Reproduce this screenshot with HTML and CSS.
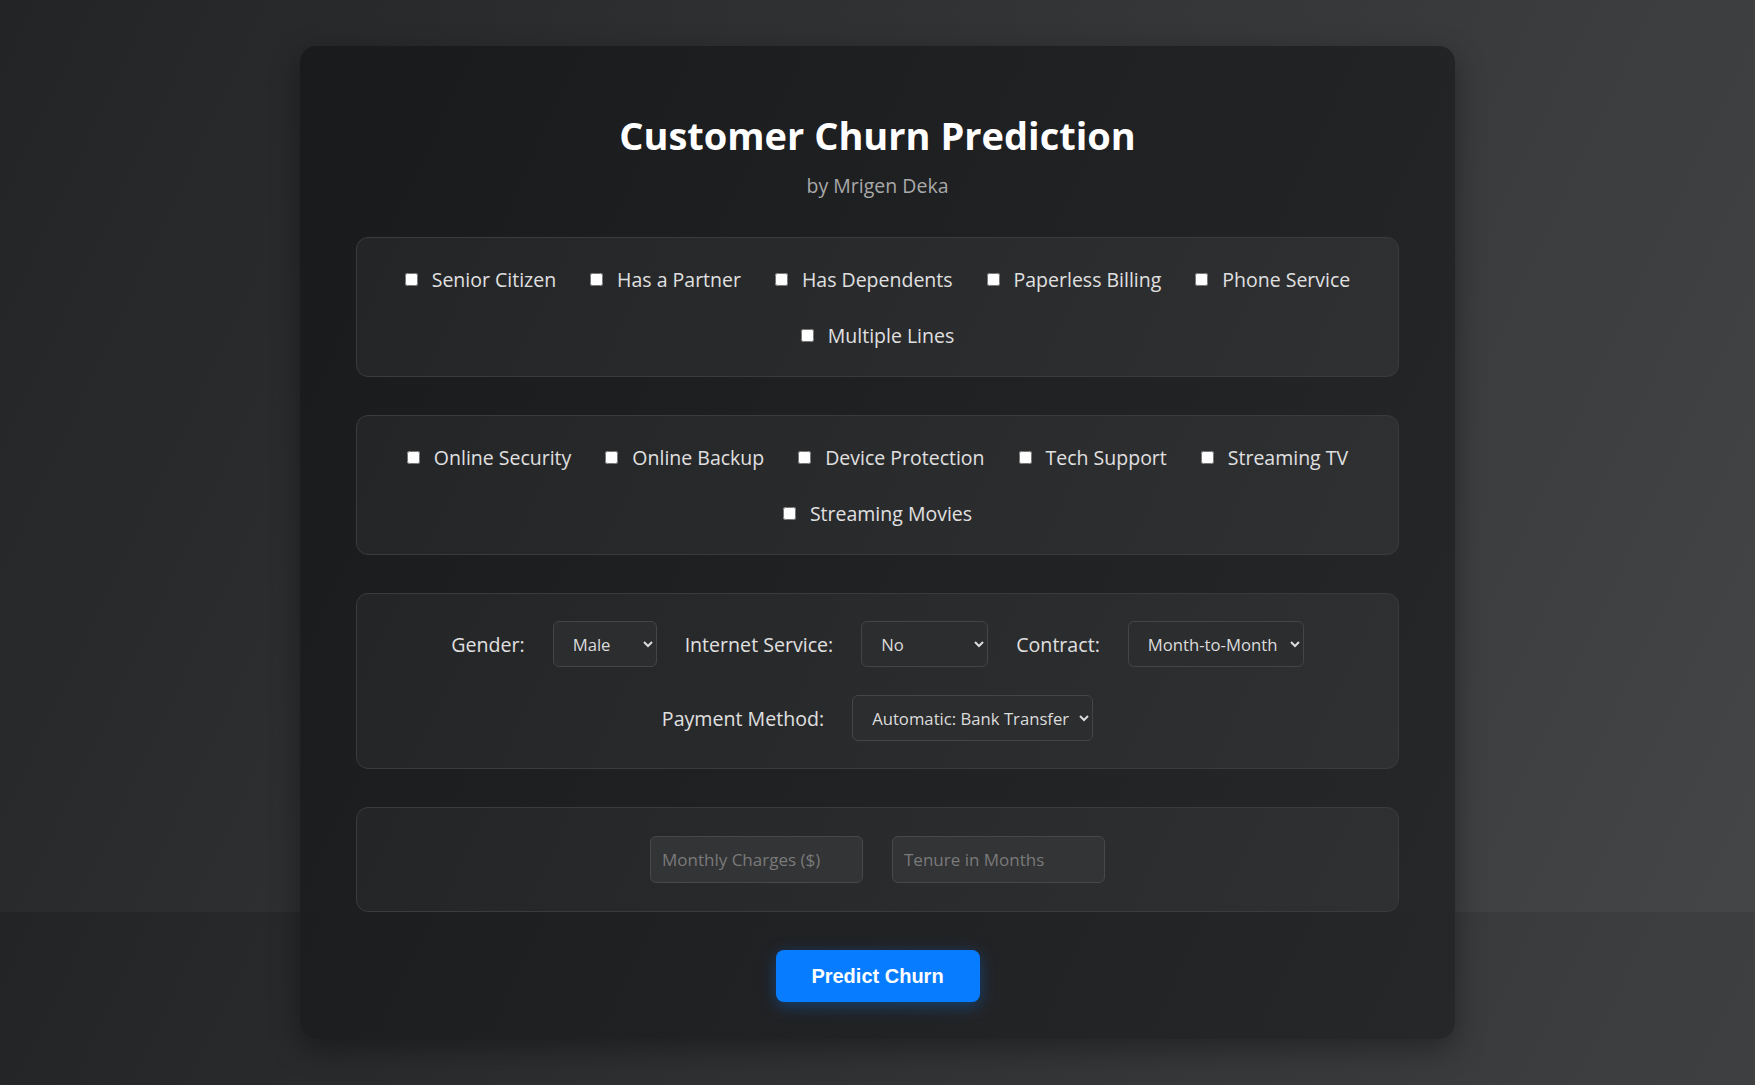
FILE: index.html
```html
<!DOCTYPE html>
<html lang="en">
<head>
<meta charset="utf-8">
<title>Customer Churn Prediction</title>
<link rel="stylesheet" href="styles.css">
</head>
<body>
<main class="card">
  <h1 class="title">Customer Churn Prediction</h1>
  <p class="subtitle">by Mrigen Deka</p>
  <form class="form">
    <section class="panel checks">
      <label class="check"><input type="checkbox"><span>Senior Citizen</span></label>
      <label class="check"><input type="checkbox"><span>Has a Partner</span></label>
      <label class="check"><input type="checkbox"><span>Has Dependents</span></label>
      <label class="check"><input type="checkbox"><span>Paperless Billing</span></label>
      <label class="check"><input type="checkbox"><span>Phone Service</span></label>
      <label class="check"><input type="checkbox"><span>Multiple Lines</span></label>
    </section>
    <section class="panel checks">
      <label class="check"><input type="checkbox"><span>Online Security</span></label>
      <label class="check"><input type="checkbox"><span>Online Backup</span></label>
      <label class="check"><input type="checkbox"><span>Device Protection</span></label>
      <label class="check"><input type="checkbox"><span>Tech Support</span></label>
      <label class="check"><input type="checkbox"><span>Streaming TV</span></label>
      <label class="check"><input type="checkbox"><span>Streaming Movies</span></label>
    </section>
    <section class="panel selects">
      <div class="field">
        <span class="field-label">Gender:</span>
        <select class="select select-gender"><option>Male</option><option>Female</option></select>
      </div>
      <div class="field">
        <span class="field-label">Internet Service:</span>
        <select class="select select-internet"><option>No</option><option>DSL</option><option>Fiber optic</option></select>
      </div>
      <div class="field">
        <span class="field-label">Contract:</span>
        <select class="select select-contract"><option>Month-to-Month</option><option>One year</option><option>Two year</option></select>
      </div>
      <div class="field">
        <span class="field-label">Payment Method:</span>
        <select class="select select-payment"><option>Automatic: Bank Transfer</option><option>Automatic: Credit Card</option><option>Electronic Check</option><option>Mailed Check</option></select>
      </div>
    </section>
    <section class="panel inputs">
      <input class="text-input" type="text" placeholder="Monthly Charges ($)">
      <input class="text-input" type="text" placeholder="Tenure in Months">
    </section>
    <div class="actions">
      <button class="predict" type="button">Predict Churn</button>
    </div>
  </form>
</main>
</body>
</html>
```

FILE: styles.css
```css
html {
  background-color: #2f3032;
  background-image: linear-gradient(115deg, #232426 0%, #444547 100%);
  background-size: 100% 912px;
  background-repeat: repeat-y;
}

body {
  margin: 0;
  min-height: 100vh;
  display: flex;
  align-items: center;
  justify-content: center;
  font-family: "Open Sans", "Noto Sans", sans-serif;
  color: #e2e2e2;
}

.card {
  box-sizing: border-box;
  width: 1155px;
  padding: 40px 56px 37px;
  border-radius: 16px;
  background: linear-gradient(115deg, rgba(25, 26, 28, 0.97) 0%, rgba(37, 38, 40, 0.95) 100%);
  box-shadow: 0 10px 30px rgba(0, 0, 0, 0.35);
  text-align: center;
}

.title {
  margin: 27px 0 0;
  font-size: 38px;
  line-height: 44px;
  font-weight: 700;
  color: #ffffff;
}

.subtitle {
  margin: 17px 0 0;
  font-size: 19.5px;
  line-height: 24px;
  color: #a9a9a9;
}

.form {
  margin-top: 39px;
  display: flex;
  flex-direction: column;
  gap: 38px;
}

.panel {
  display: flex;
  flex-wrap: wrap;
  justify-content: center;
  align-items: center;
  padding: 27px 28px;
  border: 1px solid #3a3b3d;
  border-radius: 12px;
  background: linear-gradient(115deg, #242527 0%, #2f3032 100%);
}

.checks {
  column-gap: 34px;
  row-gap: 28px;
}

.check {
  display: flex;
  align-items: center;
  gap: 14px;
  height: 28px;
  font-size: 19.5px;
  color: #e0e0e0;
}

.check input {
  width: 13px;
  height: 13px;
  margin: 0;
}

.selects {
  gap: 28px 28px;
}

.field {
  display: flex;
  align-items: center;
  gap: 28px;
}

.field-label {
  font-size: 19.6px;
  color: #e0e0e0;
}

.select {
  box-sizing: border-box;
  height: 46px;
  padding: 0 4px 0 15px;
  border: 1px solid #444547;
  border-radius: 6px;
  background-color: #2c2d2f;
  color: #dcdcdc;
  font-family: "Open Sans", "Noto Sans", sans-serif;
  font-size: 16.7px;
}

.select-gender { width: 104px; }
.select-internet { width: 127px; }
.select-contract { width: 176px; }
.select-payment { width: 241px; }

.inputs {
  gap: 29px;
  padding: 28px;
}

.text-input {
  box-sizing: border-box;
  width: 213px;
  height: 47px;
  padding: 0 11px;
  border: 1px solid #474849;
  border-radius: 6px;
  background-color: #333436;
  color: #dcdcdc;
  font-family: "Open Sans", "Noto Sans", sans-serif;
  font-size: 17px;
}

.text-input::placeholder {
  color: #7a7a7a;
}

.actions {
  display: flex;
  justify-content: center;
}

.predict {
  width: 204px;
  height: 52px;
  border: none;
  border-radius: 8px;
  background-color: #087cff;
  color: #ffffff;
  font-family: "Liberation Sans", Arial, sans-serif;
  font-size: 20px;
  font-weight: 700;
  box-shadow: 0 4px 16px rgba(0, 123, 255, 0.35);
}
```
